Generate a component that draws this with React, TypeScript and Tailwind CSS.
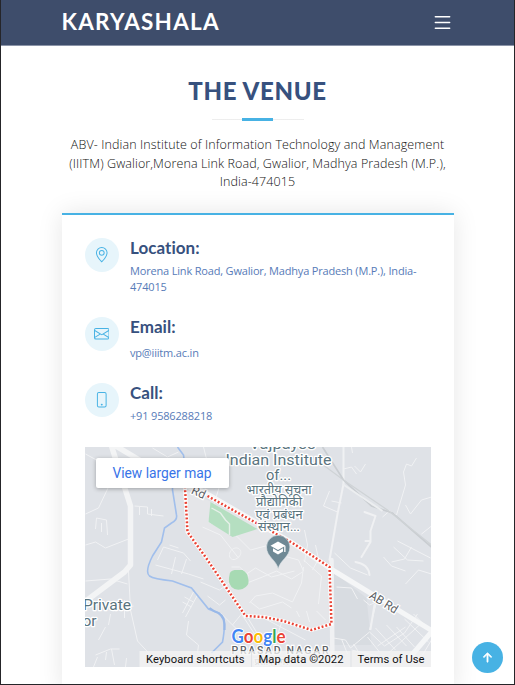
import type { ReactNode } from "react";
import { BsArrowUpShort, BsEnvelope, BsGeoAlt, BsList, BsPhone } from "react-icons/bs";

function InfoRow({ icon, title, children, className }: { icon: ReactNode; title: string; children: ReactNode; className: string }) {
  return (
    <div className={`flex items-start ${className}`}>
      <div className="flex h-[34px] w-[34px] shrink-0 items-center justify-center rounded-full bg-[#e7f5fb] text-[#47b2e4]">{icon}</div>
      <div className="ml-[11.500px] min-w-0 flex-1">
        <h4 className="mt-[0.500px] font-[Lato,sans-serif] text-[17px] leading-5 font-bold tracking-[0.050px] text-[#37517e] [font-variant-ligatures:none]">{title}</h4>
        {children}
      </div>
    </div>
  );
}

function VenueMap() {
  return (
    <svg viewBox="84.5 447 346.5 220" className="h-[220px] w-full" fontFamily="Roboto, 'Noto Sans', sans-serif">
      <rect x="84" y="447" width="348" height="220" fill="#dfe2e7" />
      <path d="M187 490L290 542L329 568L331 624L311 630L245 616L187 532Z" fill="#e5e6e9" />
      <path d="M333 572L366 598L371 645L333 645Z" fill="#d8dce1" />
      <g fill="none" stroke="#f1f2f4" strokeWidth="1">
        <path d="M85 514L98 508L108 487L120 486M85 545L95 542L105 548L128 539M95 529L96 518L106 520L107 535M101 523V532M133 485L161 482L177 485M134 506L147 507L147 514L163 516M139 507V515M151 509V516M85 454L107 466L116 461M152 448L167 457L178 452M85 581L110 579L127 584M128 571L130 610L137 641L150 655L170 667M124 600V618M117 608L133 606M110 614L108 625M105 627L98 640M95 655L110 649L119 649M97 657L93 667M111 649L114 665M126 658L125 667M106 652L105 660M155 565L188 574L203 579M157 560L163 547L183 553L190 561M169 545L178 548M175 557L171 574M186 559L181 574M203 447L208 467L216 486M197 595L185 617M193 592L182 613M184 597L193 602M182 602L191 607M188 621L186 635L198 645L197 653L207 661M207 596L219 605L225 600M200 582L219 590L230 582" />
        <path d="M220 483L208 522L236 536L250 550L265 546L276 554L298 560L303 571M202 527L220 535L238 558M232 549C225 555 231 563 237 558C244 553 239 545 232 549M231 567L239 567L248 575L244 584L232 587M244 584L262 577L276 571L291 579L302 572M249 603L255 596L272 593L292 602L301 583L303 567M250 602L259 609L282 602L291 608M303 560L321 576L318 604M296 611L299 617M306 611L309 622M316 611L325 620M240 578L255 568L271 577L294 571M232 625L241 614L256 637M248 619L262 642M265 619L286 630L305 640M281 623L275 641M220 613L240 633M304 530L307 545L304 562M315 545L318 559L312 570" />
        <path d="M343 469L351 467L356 474M354 466L360 472L365 464M329 491L323 506L337 512M331 501L341 503M351 447L352 453M416 458L411 466L406 464L403 472L405 485L396 515L389 511L382 517M405 505L410 514L421 500L431 497M421 534L431 526M334 553L350 568L367 575M383 557L391 566L405 571M393 547L407 560L423 561M397 541L430 558M405 584L418 570L431 574M411 547L404 559L391 562" />
        <path d="M363 600L369 605L376 602L369 630M333 638L345 640L350 648L369 632L384 646L404 633L417 614M341 639L347 654M353 644L360 655M367 637L379 652M375 628L395 650M386 625L406 646M396 627L414 647M377 646L405 627M388 653L419 625M351 650L378 656M404 619L428 642M413 614L431 632M422 655L431 640M336 587L351 588L357 599" />
      </g>
      <g fill="none" stroke="#f0f1f3" strokeLinejoin="round" strokeLinecap="round">
        <path d="M343 447V484L337 514L329 560M364 512L375 516L370 531V542L361 557M365 541H370M355 562Q368 564 369 575M374 605L370 629" strokeWidth="2" />
        <path d="M111 446L130 506V565L124 572L84 602M112 444L164 475L198 491" strokeWidth="5.5" stroke="#f3f4f5" />
        <path d="M331 560L332 667" strokeWidth="4.5" />
        <path d="M191 485L292 543L332 570L432 631M431 632L407 660" strokeWidth="5" stroke="#f5f6f7" />
      </g>
      <path d="M322 447L343 480L371 506L392 513L431 547" fill="none" stroke="#c9cdd1" strokeWidth="1.7" />
      <path d="M312 457L343 480L387 510L431 545" fill="none" stroke="#cfd3d6" strokeWidth="1.2" />
      <path d="M342 484L382 511" fill="none" stroke="#eceef0" strokeWidth="2" />
      <path d="M210 502L257 529L232 537L208 522Z" fill="#b5dfc1" />
      <path d="M211 508L220 513L225 520L229 524V535" fill="none" stroke="#e6f0e9" strokeWidth="1.4" />
      <path d="M229 575Q229 571 234 570L242 570Q247 572 248 580Q249 586 242 589Q235 591 231 587Q227 582 229 575Z" fill="#a7dab3" />
      <path d="M177 447L183 455L184 463L172 475V490L176 515Q177 520 171 523L164 528L161 542L152 556Q144 572 149 576Q153 579 172 581L191 588L208 609L218 613L223 618Q225 626 222 642L211 653" fill="none" stroke="#a1bfec" strokeWidth="1.6" />
      <path d="M209 608Q214 612 218 613Q225 617 224 630" fill="none" stroke="#98b8e8" strokeWidth="2.2" />
      <path d="M207 496L292 543L329 567L331 624L311 630L283 621L263 617L245 616L205 557L187 532L184.500 488" fill="none" stroke="#fff" strokeWidth="3.8" />
      <path d="M207 496L292 543L329 567L331 624L311 630L283 621L263 617L245 616L205 557L187 532L184.500 488" fill="none" stroke="#ea4335" strokeWidth="2.5" strokeDasharray="1.9 2" />
      <g fill="#5a747e" stroke="#fff" strokeWidth="2.6" strokeLinejoin="round" paintOrder="stroke" textAnchor="middle">
        <text x="282" y="449" fontSize="15.500" textLength="66" lengthAdjust="spacingAndGlyphs">Vajpayee</text>
        <text x="278" y="464.500" fontSize="15.500" textLength="106" lengthAdjust="spacingAndGlyphs">Indian Institute</text>
        <text x="278" y="480" fontSize="15.500" textLength="25" lengthAdjust="spacingAndGlyphs">of...</text>
        <g fontSize="12.500">
          <text x="278.500" y="493.500" textLength="65" lengthAdjust="spacingAndGlyphs">भारतीय सूचना</text>
          <text x="278.500" y="506" textLength="46" lengthAdjust="spacingAndGlyphs">प्रौद्योगिकी</text>
          <text x="278.500" y="518.500" textLength="47" lengthAdjust="spacingAndGlyphs">एवं प्रबंधन</text>
          <text x="278.500" y="531" textLength="42" lengthAdjust="spacingAndGlyphs">संस्थान...</text>
        </g>
        <text x="106.500" y="610" fontSize="15.500" textLength="48" lengthAdjust="spacingAndGlyphs">Private</text>
        <text x="89" y="626" fontSize="15.500">or</text>
      </g>
      <g fill="#5d6266" stroke="#fff" strokeWidth="2.500" paintOrder="stroke" fontSize="12">
        <text transform="translate(190 493) rotate(25)">Rd</text>
        <text transform="translate(368 597.5) rotate(32)" textLength="31" lengthAdjust="spacingAndGlyphs">AB Rd</text>
        <text x="231" y="653.500" fontSize="10.500" fontWeight="500" textLength="97">PRASAD NAGAR</text>
        <text x="254" y="665" fontSize="9" opacity=".6">प्रसाद नगर</text>
      </g>
      <path d="M277.700 569C276 560 266 557 266 547A11.700 11.700 0 0 1 289.400 547C289.400 557 279.400 560 277.700 569Z" fill="#6f8995" stroke="#e4eaec" strokeWidth=".6" />
      <path d="M277.500 541.500L270 545.700L277.500 550L285 545.700ZM272.500 548.300V551.500L277.500 554.400L282.500 551.500V548.300L277.500 551.200ZM283.700 546.600V552H285V546Z" fill="#fff" />
      <text x="231" y="642.500" fontFamily="Lato, sans-serif" fontSize="18.500" fontWeight="700" textLength="54" lengthAdjust="spacingAndGlyphs" stroke="#fff" strokeWidth="2" paintOrder="stroke">
        <tspan fill="#4285f4">G</tspan><tspan fill="#ea4335">o</tspan><tspan fill="#fbbc05">o</tspan><tspan fill="#4285f4">g</tspan><tspan fill="#34a853">l</tspan><tspan fill="#ea4335">e</tspan>
      </text>
      <rect x="139" y="651" width="292" height="16" fill="#f5f5f5" opacity=".76" />
      <path d="M251 651V667M350.500 651V667" stroke="#dfe2e6" strokeWidth="1" />
      <g fill="#111" fontSize="11.200">
        <text x="145.500" y="663" textLength="98.500">Keyboard shortcuts</text>
        <text x="258" y="663" textLength="85">Map data ©2022</text>
        <text x="357" y="663" textLength="67">Terms of Use</text>
      </g>
    </svg>
  );
}

export default function App() {
  return (
    <div className="relative h-[685px] w-[515px] overflow-hidden border-r border-b border-l border-[#252529] bg-white font-['Open_Sans',sans-serif]">
      <header className="flex h-[46px] items-start justify-between border-b border-[#8b94a8] bg-[#3e4d6b] pr-[60px] pl-[60.500px] text-white">
        <h1 className="mt-[8px] font-[Lato,sans-serif] text-[22.500px] leading-[28px] font-bold tracking-[1.250px]">KARYASHALA</h1>
        <BsList className="mt-[11px] size-[23px]" />
      </header>
      <main className="pr-[60px] pl-[61px]">
        <div className="-ml-px flex flex-col items-center">
          <h2 className="mt-[30px] font-[Lato,sans-serif] text-[24px] leading-[30px] font-black tracking-[0.650px] text-[#37517e]">THE VENUE</h2>
          <div className="mt-[12px] flex h-[3px] w-[92px] items-center justify-center bg-linear-to-b from-transparent from-33% via-[#dddddd] via-34% to-transparent to-67%">
            <span className="h-[2.500px] w-[31px] bg-[#47b2e4]" />
          </div>
          <p className="mt-[15px] text-center text-[12.500px] leading-[18.600px] font-light tracking-[0.110px] whitespace-nowrap text-[#111111]">
            ABV- Indian Institute of Information Technology and Management<br />
            (IIITM) Gwalior,Morena Link Road, Gwalior, Madhya Pradesh (M.P.),<br />
            India-474015
          </p>
        </div>
        <section className="mt-[21px] h-[480px] border-t-[2.500px] border-[#47b2e4] bg-white pr-[23px] pl-[22.500px] pt-[23px] shadow-[0_0_24px_rgba(0,0,0,0.1)]">
          <InfoRow className="h-[79px]" title="Location:" icon={<BsGeoAlt className="size-[15.500px]" />}>
            <p className="mt-[4.500px] text-[11px] leading-[16px] tracking-[-0.175px] whitespace-nowrap text-[#577bb8]">
              Morena Link Road, Gwalior, Madhya Pradesh (M.P.), India-<br />474015
            </p>
          </InfoRow>
          <InfoRow className="h-[66px]" title="Email:" icon={<BsEnvelope className="size-[15.500px]" />}>
            <p className="mt-[7.500px] text-[11px] leading-[16px] tracking-[-0.175px] text-[#577bb8]">vp@iiitm.ac.in</p>
          </InfoRow>
          <InfoRow className="h-[64px]" title="Call:" icon={<BsPhone className="size-[15.500px]" />}>
            <p className="mt-[4.500px] text-[11px] leading-[16px] tracking-[-0.175px] text-[#577bb8]">+91 9586288218</p>
          </InfoRow>
          <div className="relative h-[220px]">
            <VenueMap />
            <a className="absolute top-[11px] left-[11px] flex h-[30px] w-[133px] items-center justify-center rounded-[2px] bg-white font-[Roboto,sans-serif] text-[13.800px] text-[#3874e8] shadow-[0_1px_4px_rgba(0,0,0,0.3)]"><span className="translate-y-[0.500px]">View larger map</span></a>
          </div>
        </section>
      </main>
      <button className="absolute top-[642px] left-[471px] flex size-[31px] items-center justify-center rounded-full bg-[#47b2e4] text-white">
        <BsArrowUpShort className="size-[19px]" stroke="currentColor" strokeWidth=".5" />
      </button>
    </div>
  );
}
